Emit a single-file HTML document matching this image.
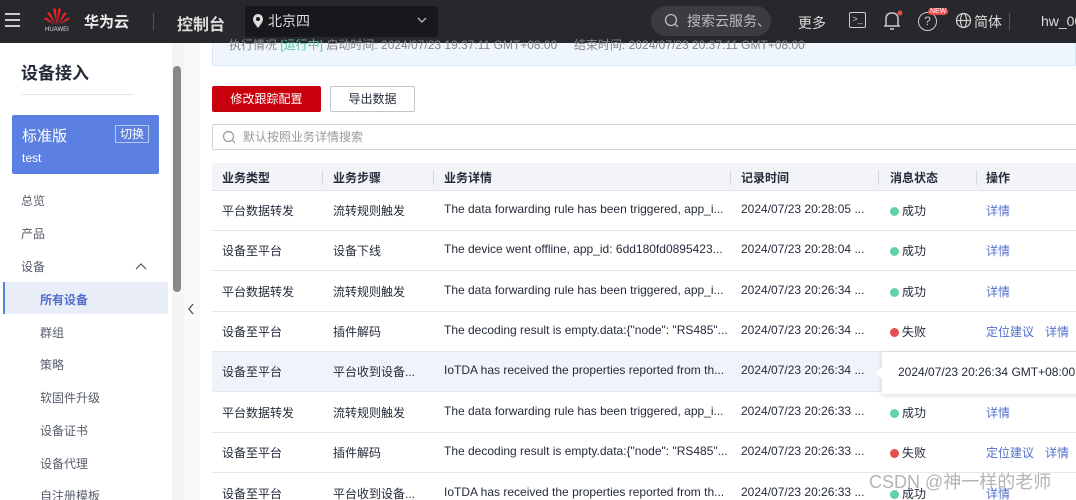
<!DOCTYPE html>
<html><head><meta charset="utf-8"><style>
*{margin:0;padding:0;box-sizing:border-box}
html,body{width:1076px;height:500px;overflow:hidden}
body{background:#fff;font-family:"Liberation Sans","Noto Sans CJK SC",sans-serif;font-size:12px;color:#252b3a;position:relative}
.a{position:absolute}
.hd{left:0;top:0;width:1076px;height:43px;background:#26282c;color:#dfe1e6}
.side{left:0;top:43px;width:172px;height:457px;background:#fff}
.mi{position:absolute;left:21px;font-size:12px;color:#575d6c}
.sub{left:40px}
.row{position:absolute;left:212px;width:864px;height:40px;border-bottom:1px solid #e6e8ec;font-size:12px;color:#252b3a}
.row span{position:absolute;top:11px;white-space:nowrap}
.dot{display:inline-block;width:9px;height:9px;border-radius:50%;margin-right:3px;vertical-align:-1px}
.lk{color:#526ecc}
</style></head><body>
<div class="a hd">
 <div class="a" style="left:5px;top:13px;width:15px;height:2px;background:#ccc;box-shadow:0 6px 0 #ccc,0 12px 0 #ccc"></div>
 <svg class="a" style="left:44px;top:7px" width="26" height="20" viewBox="0 0 26 20"><g fill="#e5222a"><path d="M13 18 L9 2 Q11 0 12 3Z"/><path d="M13 18 L17 2 Q15 0 14 3Z"/><path d="M12 18 L3 6 Q5 4 7 7Z"/><path d="M14 18 L23 6 Q21 4 19 7Z"/><path d="M11 18 L0 12 Q1 10 3 11Z"/><path d="M15 18 L26 12 Q25 10 23 11Z"/></g></svg>
 <div class="a" style="left:45px;top:27px;font-size:6px;color:#ddd">HUAWEI</div>
 <div class="a" style="left:84px;top:11px;font-size:15px;font-weight:bold;color:#eee">华为云</div>
 <div class="a" style="left:153px;top:13px;width:1px;height:17px;background:#555"></div>
 <div class="a" style="left:177px;top:11px;font-size:16px;font-weight:bold;color:#ddd">控制台</div>
 <div class="a" style="left:245px;top:6px;width:193px;height:31px;background:#17181b;border-radius:3px"></div>
 <svg class="a" style="left:252px;top:13px" width="12" height="16" viewBox="0 0 12 16"><path d="M6 15 C2 10 1 8 1 6 A5 5 0 0 1 11 6 C11 8 10 10 6 15Z" fill="#ddd"/><circle cx="6" cy="6" r="2" fill="#17181b"/></svg>
 <div class="a" style="left:268px;top:11px;font-size:14px;color:#ddd">北京四</div>
 <svg class="a" style="left:417px;top:17px" width="10" height="7" viewBox="0 0 10 7"><path d="M1 1 L5 5 L9 1" fill="none" stroke="#bbb" stroke-width="1.3"/></svg>
 <div class="a" style="left:651px;top:6px;width:120px;height:30px;background:#3a3c41;border-radius:15px"></div>
 <svg class="a" style="left:664px;top:13px" width="16" height="16" viewBox="0 0 16 16"><circle cx="7" cy="7" r="5.5" fill="none" stroke="#bbb" stroke-width="1.3"/><path d="M11 11 L14 14" stroke="#bbb" stroke-width="1.3"/></svg>
 <div class="a" style="left:687px;top:11px;font-size:14px;color:#bbb">搜索云服务、</div>
 <div class="a" style="left:798px;top:13px;font-size:14px;color:#ddd">更多</div>
 <div class="a" style="left:849px;top:12px;width:17px;height:16px;border:1.5px solid #ccc;border-radius:2px;font-size:9px;line-height:12px;text-align:center;color:#ccc">&gt;_</div>
 <svg class="a" style="left:883px;top:10px" width="20" height="22" viewBox="0 0 20 22"><path d="M3 16 L3 9 Q3 3 9 3 Q15 3 15 9 L15 16 Z M1 16 H17 M7 19 H11" fill="none" stroke="#ccc" stroke-width="1.5"/><circle cx="17" cy="3" r="2.5" fill="#e84e4e"/></svg>
 <div class="a" style="left:918px;top:12px;width:19px;height:19px;border:1.5px solid #ccc;border-radius:50%;text-align:center;font-size:12px;line-height:16px;color:#ccc">?</div>
 <div class="a" style="left:928px;top:8px;background:#e84e4e;color:#fff;font-size:7px;padding:0 2px;border-radius:5px">NEW</div>
 <svg class="a" style="left:955px;top:12px" width="17" height="17" viewBox="0 0 17 17"><circle cx="8.5" cy="8.5" r="7" fill="none" stroke="#ccc" stroke-width="1.3"/><ellipse cx="8.5" cy="8.5" rx="3" ry="7" fill="none" stroke="#ccc" stroke-width="1.2"/><path d="M1.5 8.5 H15.5" stroke="#ccc" stroke-width="1.2"/></svg>
 <div class="a" style="left:974px;top:12px;font-size:14px;color:#ddd">简体</div>
 <div class="a" style="left:1009px;top:13px;width:1px;height:17px;background:#555"></div>
 <div class="a" style="left:1041px;top:13px;font-size:14px;color:#ddd">hw_00</div>
</div>
<div class="a side">
 <div class="a" style="left:21px;top:16px;font-size:17px;font-weight:bold">设备接入</div>
 <div class="a" style="left:22px;top:51px;width:112px;height:1px;background:#e6e6e6"></div>
 <div class="a" style="left:12px;top:72px;width:147px;height:59px;background:#5b80e1;border-radius:2px;color:#fff">
  <div class="a" style="left:10px;top:10px;font-size:15px">标准版</div>
  <div class="a" style="left:103px;top:10px;border:1px solid #b8c8f2;font-size:12px;padding:0 4px;line-height:16px">切换</div>
  <div class="a" style="left:10px;top:36px;font-size:12px">test</div>
 </div>
 <div class="mi" style="top:149px">总览</div>
 <div class="mi" style="top:182px">产品</div>
 <div class="mi" style="top:215px">设备</div>
 <svg class="a" style="left:135px;top:220px" width="12" height="8" viewBox="0 0 12 8"><path d="M1 6 L6 1 L11 6" fill="none" stroke="#555" stroke-width="1.2"/></svg>
 <div class="a" style="left:3px;top:239px;width:165px;height:32px;background:#e8edf8;border-left:2px solid #5b80e1"></div>
 <div class="mi sub" style="top:248px;color:#526ecc;font-weight:bold">所有设备</div>
 <div class="mi sub" style="top:281px">群组</div>
 <div class="mi sub" style="top:313px">策略</div>
 <div class="mi sub" style="top:346px">软固件升级</div>
 <div class="mi sub" style="top:379px">设备证书</div>
 <div class="mi sub" style="top:412px">设备代理</div>
 <div class="mi sub" style="top:444px">自注册模板</div>
</div>
<div class="a" style="left:172px;top:43px;width:12px;height:457px;background:#f5f5f5"></div>
<div class="a" style="left:173px;top:66px;width:8px;height:226px;background:#888;border-radius:4px"></div>
<div class="a" style="left:184px;top:43px;width:16px;height:457px;background:#fafafa"></div>
<svg class="a" style="left:187px;top:303px" width="8" height="12" viewBox="0 0 8 12"><path d="M6 1 L2 6 L6 11" fill="none" stroke="#555" stroke-width="1.3"/></svg>
<div class="a" style="left:212px;top:43px;width:864px;height:23px;background:#eef5fd;border:1px solid #dbe7f7;border-top:none;font-size:12px;color:#888;line-height:4px;white-space:nowrap;padding-left:16px">执行情况 <span style="color:#5ac8a0">[运行中]</span> 启动时间: 2024/07/23 19:37:11 GMT+08:00 &nbsp;&nbsp;&nbsp; 结束时间: 2024/07/23 20:37:11 GMT+08:00</div>
<div class="a" style="left:212px;top:86px;width:109px;height:26px;background:#c7000b;color:#fff;text-align:center;line-height:26px;border-radius:2px">修改跟踪配置</div>
<div class="a" style="left:330px;top:86px;width:85px;height:26px;border:1px solid #c2c5cc;text-align:center;line-height:24px;border-radius:2px">导出数据</div>
<div class="a" style="left:212px;top:124px;width:866px;height:26px;border:1px solid #d0d3d8;border-radius:2px;color:#999;line-height:24px;padding-left:30px">默认按照业务详情搜索</div>
<svg class="a" style="left:222px;top:130px" width="15" height="15" viewBox="0 0 15 15"><circle cx="6.5" cy="6.5" r="5" fill="none" stroke="#999" stroke-width="1.2"/><path d="M10 10 L13 13" stroke="#999" stroke-width="1.2"/></svg>
<div class="a" style="left:212px;top:163px;width:864px;height:28px;background:#f3f4f7;border-bottom:1px solid #e0e2e6;font-weight:bold;color:#252b3a">
 <span class="a" style="left:10px;top:6px">业务类型</span>
 <span class="a" style="left:110px;top:7px;width:1px;height:15px;background:#d5d7dc"></span>
 <span class="a" style="left:121px;top:6px">业务步骤</span>
 <span class="a" style="left:221px;top:7px;width:1px;height:15px;background:#d5d7dc"></span>
 <span class="a" style="left:232px;top:6px">业务详情</span>
 <span class="a" style="left:518px;top:7px;width:1px;height:15px;background:#d5d7dc"></span>
 <span class="a" style="left:529px;top:6px">记录时间</span>
 <span class="a" style="left:666px;top:7px;width:1px;height:15px;background:#d5d7dc"></span>
 <span class="a" style="left:678px;top:6px">消息状态</span>
 <span class="a" style="left:764px;top:7px;width:1px;height:15px;background:#d5d7dc"></span>
 <span class="a" style="left:774px;top:6px">操作</span>
</div>
<div class="row" style="top:191px"><span style="left:10px">平台数据转发</span><span style="left:121px">流转规则触发</span><span style="left:232px">The data forwarding rule has been triggered, app_i...</span><span style="left:529px">2024/07/23 20:28:05 ...</span><span style="left:678px"><i class="dot" style="background:#5fd2a8"></i>成功</span><span class="lk" style="left:774px">详情</span></div>
<div class="row" style="top:231px"><span style="left:10px">设备至平台</span><span style="left:121px">设备下线</span><span style="left:232px">The device went offline, app_id: 6dd180fd0895423...</span><span style="left:529px">2024/07/23 20:28:04 ...</span><span style="left:678px"><i class="dot" style="background:#5fd2a8"></i>成功</span><span class="lk" style="left:774px">详情</span></div>
<div class="row" style="top:272px"><span style="left:10px">平台数据转发</span><span style="left:121px">流转规则触发</span><span style="left:232px">The data forwarding rule has been triggered, app_i...</span><span style="left:529px">2024/07/23 20:26:34 ...</span><span style="left:678px"><i class="dot" style="background:#5fd2a8"></i>成功</span><span class="lk" style="left:774px">详情</span></div>
<div class="row" style="top:312px"><span style="left:10px">设备至平台</span><span style="left:121px">插件解码</span><span style="left:232px">The decoding result is empty.data:{"node": "RS485"...</span><span style="left:529px">2024/07/23 20:26:34 ...</span><span style="left:678px"><i class="dot" style="background:#e84e4e"></i>失败</span><span class="lk" style="left:774px">定位建议</span><span class="lk" style="left:833px">详情</span></div>
<div class="row" style="top:352px;background:#f0f3fa"><span style="left:10px">设备至平台</span><span style="left:121px">平台收到设备...</span><span style="left:232px">IoTDA has received the properties reported from th...</span><span style="left:529px">2024/07/23 20:26:34 ...</span></div>
<div class="row" style="top:393px"><span style="left:10px">平台数据转发</span><span style="left:121px">流转规则触发</span><span style="left:232px">The data forwarding rule has been triggered, app_i...</span><span style="left:529px">2024/07/23 20:26:33 ...</span><span style="left:678px"><i class="dot" style="background:#5fd2a8"></i>成功</span><span class="lk" style="left:774px">详情</span></div>
<div class="row" style="top:433px"><span style="left:10px">设备至平台</span><span style="left:121px">插件解码</span><span style="left:232px">The decoding result is empty.data:{"node": "RS485"...</span><span style="left:529px">2024/07/23 20:26:33 ...</span><span style="left:678px"><i class="dot" style="background:#e84e4e"></i>失败</span><span class="lk" style="left:774px">定位建议</span><span class="lk" style="left:833px">详情</span></div>
<div class="row" style="top:474px"><span style="left:10px">设备至平台</span><span style="left:121px">平台收到设备...</span><span style="left:232px">IoTDA has received the properties reported from th...</span><span style="left:529px">2024/07/23 20:26:33 ...</span><span style="left:678px"><i class="dot" style="background:#5fd2a8"></i>成功</span><span class="lk" style="left:774px">详情</span></div>
<div class="a" style="left:882px;top:352px;width:200px;height:42px;background:#fff;box-shadow:0 1px 6px rgba(0,0,0,.15);border-radius:2px;padding:13px 0 0 16px;white-space:nowrap">2024/07/23 20:26:34 GMT+08:00</div>
<div class="a" style="left:876px;top:367px;width:0;height:0;border-top:6px solid transparent;border-bottom:6px solid transparent;border-right:6px solid #fff"></div>
<div class="a" style="left:869px;top:468px;font-size:18px;color:rgba(140,140,140,.65);white-space:nowrap">CSDN @神一样的老师</div>
</body></html>
